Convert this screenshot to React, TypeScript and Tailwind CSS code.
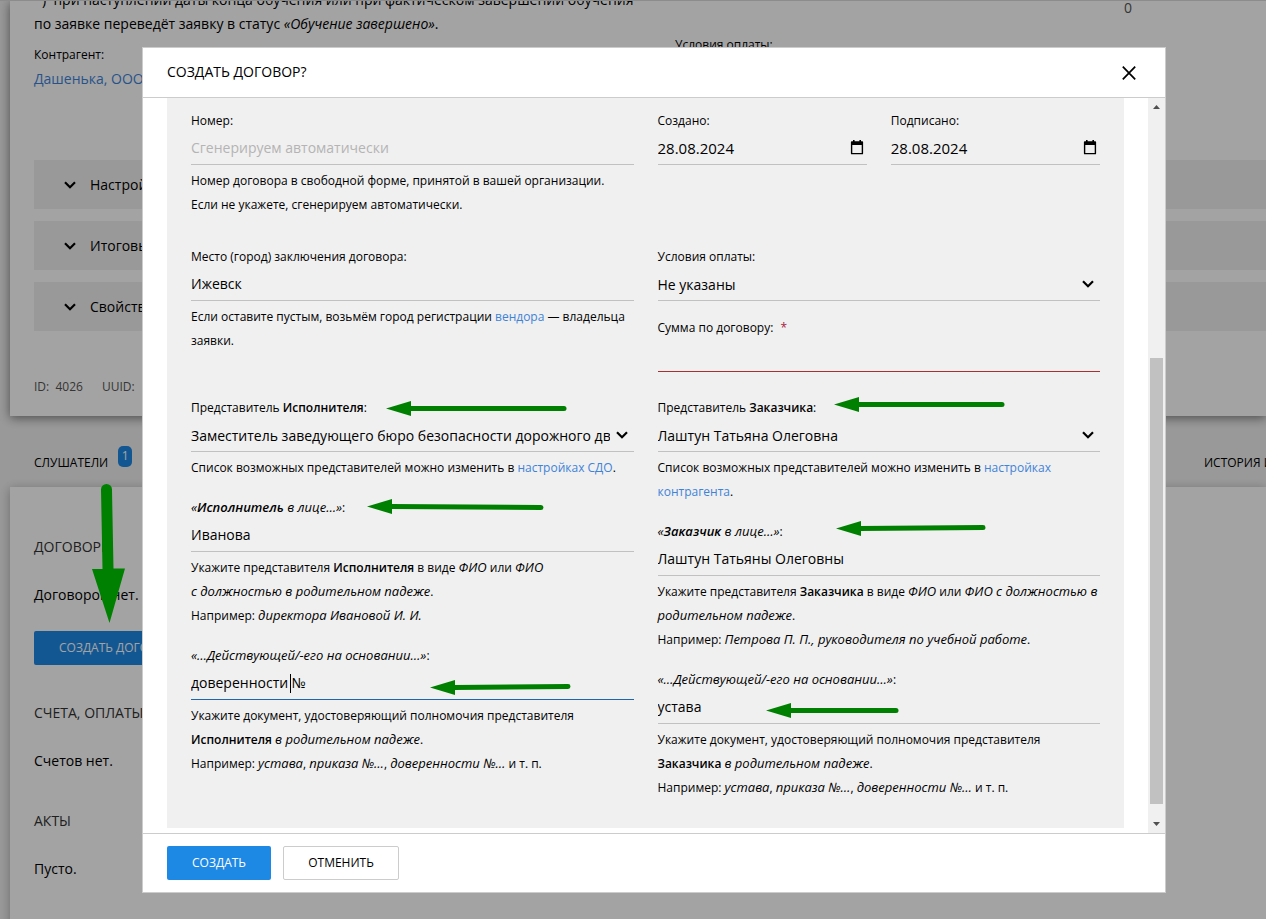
import { useId, type ReactNode } from "react";

function Chevron({ className }: { className: string }) {
  return (
    <svg viewBox="0 0 12 8" className={className} fill="none" stroke="#000" strokeWidth="2.2" aria-hidden="true">
      <path d="M1 1.2 6 6.2 11 1.2" />
    </svg>
  );
}

function CalendarIcon() {
  return (
    <svg viewBox="0 0 14 15" className="h-[15px] w-[14px]" aria-hidden="true">
      <path fillRule="evenodd" d="M3 0h1.6v1.2h4.8V0H11v1.2h1.2q.9 0 .9.9v11.3q0 .9-.9.9H1.8q-.9 0-.9-.9V2.1q0-.9.9-.9H3zM2.3 5v7.9h9.4V5z" />
    </svg>
  );
}

const control =
  "block h-8 w-full appearance-none rounded-none border-b bg-transparent leading-[24px] text-black outline-none placeholder:text-[#b4b4b4]";

const lineColors = {
  normal: "border-b-[#c1c1c1]",
  required: "border-b-[#a8302f]",
  focused: "border-b-[#1f65ad]",
};

type FieldProps = {
  label: ReactNode;
  value?: string;
  placeholder?: string;
  kind?: "text" | "date" | "select";
  state?: keyof typeof lineColors;
  children?: ReactNode;
};

function Field({ label, value = "", placeholder, kind = "text", state = "normal", children }: FieldProps) {
  const id = useId();
  const line = lineColors[state];
  return (
    <div>
      <label htmlFor={id} className="block">
        {label}
      </label>
      <div className="relative">
        {kind === "select" ? (
          <>
            <select id={id} defaultValue={value} className={`${control} ${line} pr-6 text-[14px]`}>
              <option>{value}</option>
            </select>
            <Chevron className="pointer-events-none absolute top-[11px] right-[6px] h-2 w-3" />
          </>
        ) : (
          <input
            id={id}
            type="text"
            defaultValue={value}
            placeholder={placeholder}
            className={`${control} ${line} pb-[2px] ${kind === "date" ? "text-[15px]" : "text-[14px]"}`}
          />
        )}
        {kind === "date" && (
          <button type="button" aria-label="Выбрать дату" className="absolute top-[7px] right-[3px]">
            <CalendarIcon />
          </button>
        )}
        {state === "focused" && <span className="absolute top-[6px] left-[99px] h-[19px] w-px bg-black" />}
      </div>
      {children && <p className="pt-1">{children}</p>}
    </div>
  );
}

function Link({ children }: { children: ReactNode }) {
  return (
    <a href="#" className="text-[#3e83d8]">
      {children}
    </a>
  );
}

function Page() {
  return (
    <div className="h-screen overflow-hidden border-t border-[#dcdcdc] bg-[#f0f0f0] text-[14px] leading-[24px]">
      <section className="relative ml-[10px] h-[415px] overflow-hidden bg-white pl-6 shadow-[0_2px_10px_rgba(0,0,0,0.5)]">
        <div className="-mt-[13px] grid grid-cols-[600px_41px_1fr]">
          <p className="whitespace-nowrap">
            <span className="pl-2">)</span>&nbsp; при наступлении даты конца обучения или при фактическом завершении обучения
            <br />
            по заявке переведёт заявку в статус <i>«Обучение завершено»</i>.
          </p>
          <span />
          <p className="pt-2 pl-[449px] text-[#555]">0</p>
        </div>
        <div className="grid grid-cols-[600px_41px_1fr] pt-[7px]">
          <div>
            <div className="text-[12px]">Контрагент:</div>
            <a href="#" className="text-[#3e83d8]">
              Дашенька, ООО
            </a>
          </div>
          <span />
          <div className="-mt-[10px] text-[12px]">Условия оплаты:</div>
        </div>
        <div className="flex flex-col gap-3 pt-[69px]">
          {["Настройки", "Итоговые документы", "Свойства"].map((name) => (
            <button key={name} type="button" className="flex h-[49px] items-center bg-[#f0f0f0] pl-[30px] text-left">
              <Chevron className="mr-[14px] h-2 w-3" />
              {name}
            </button>
          ))}
        </div>
        <p className="flex pt-11 text-[12px] text-[#555]">
          <span className="w-[68px]">ID:&nbsp; 4026</span>
          <span>UUID:</span>
        </p>
      </section>
      <nav className="flex h-[71px] items-center justify-between pt-[22px] pl-[34px] text-[12px]">
        <a href="#" className="flex">
          СЛУШАТЕЛИ
          <span className="-mt-[5px] ml-[10px] h-[21px] w-[14px] rounded-[5px] bg-[#1e88e5] text-center leading-[20px] text-white">1</span>
        </a>
        <a href="#" className="w-[62px] overflow-hidden whitespace-nowrap">
          ИСТОРИЯ ИЗМЕНЕНИЙ
        </a>
      </nav>
      <section className="ml-[10px] h-full bg-white pt-12 pl-6 shadow-[0_2px_10px_rgba(0,0,0,0.3)]">
        <h2 className="text-[#333]">ДОГОВОРЫ</h2>
        <p className="pt-6">Договоров нет.</p>
        <button type="button" className="mt-6 block h-[34px] rounded-[2px] bg-[#1e88e5] px-[25px] text-[12px] text-white">
          СОЗДАТЬ ДОГОВОР
        </button>
        <h2 className="pt-9 text-[#333]">СЧЕТА, ОПЛАТЫ</h2>
        <p className="pt-6">Счетов нет.</p>
        <h2 className="pt-9 text-[#333]">АКТЫ</h2>
        <p className="pt-6">Пусто.</p>
      </section>
    </div>
  );
}

function ScrollBar() {
  return (
    <div className="flex w-[17px] shrink-0 flex-col items-center bg-[#f0f0f0] py-[7px]" aria-hidden="true">
      <svg viewBox="0 0 7 4" className="h-1 w-[7px]" fill="#505050">
        <path d="M0 4 3.500 0 7 4z" />
      </svg>
      <span className="grow-[249]" />
      <span className="w-[13px] grow-[446] bg-[#c1c1c1]" />
      <span className="grow-[18]" />
      <svg viewBox="0 0 7 4" className="h-1 w-[7px]" fill="#505050">
        <path d="M0 0 3.500 4 7 0z" />
      </svg>
    </div>
  );
}

function Dialog() {
  return (
    <div className="fixed inset-0 flex items-start bg-black/36 pt-[47px] pr-[100px] pl-[142px]">
      <div role="dialog" aria-labelledby="dialog-title" className="flex-1 border border-[#ccc] bg-white">
        <header className="flex h-[50px] items-center justify-between border-b border-[#ccc] pr-[29px] pl-6">
          <h1 id="dialog-title" className="pb-[2px] text-[14px]">
            СОЗДАТЬ ДОГОВОР?
          </h1>
          <button type="button" aria-label="Закрыть">
            <svg viewBox="0 0 14 14" className="h-[14px] w-[14px]" fill="none" stroke="#000" strokeWidth="1.7" aria-hidden="true">
              <path d="M.8.6 13.200 13.400M13.200.6.8 13.400" />
            </svg>
          </button>
        </header>
        <div className="flex">
          <form className="mb-[5px] ml-6 mr-6 flex-1 bg-[#f0f0f0] px-6 pt-[11px] pb-7 text-[12px] leading-[24px] [&_b]:font-semibold [&_i]:text-[13px] [&_i]:leading-none">
            <div className="grid grid-cols-2 gap-x-6">
              <Field label="Номер:" placeholder="Сгенерируем автоматически">
                Номер договора в свободной форме, принятой в вашей организации. Если не укажете, сгенерируем автоматически.
              </Field>
              <div className="grid grid-cols-2 gap-x-6">
                <Field label="Создано:" value="28.08.2024" kind="date" />
                <Field label="Подписано:" value="28.08.2024" kind="date" />
              </div>
            </div>
            <div className="grid grid-cols-2 gap-x-6 pt-7">
              <Field label="Место (город) заключения договора:" value="Ижевск">
                Если оставите пустым, возьмём город регистрации <Link>вендора</Link> — владельца заявки.
              </Field>
              <div className="flex flex-col gap-[15px]">
                <Field label="Условия оплаты:" value="Не указаны" kind="select" />
                <Field
                  label={
                    <>
                      Сумма по договору: <span className="pl-1 text-[#a8203f]">*</span>
                    </>
                  }
                  state="required"
                />
              </div>
            </div>
            <div className="grid grid-cols-2 gap-x-6 pt-6">
              <div className="flex flex-col gap-4">
                <Field
                  label={<>Представитель <b>Исполнителя</b>:</>}
                  value="Заместитель заведующего бюро безопасности дорожного движения"
                  kind="select"
                >
                  Список возможных представителей можно изменить в <Link>настройках СДО</Link>.
                </Field>
                <Field label={<><i>«<b>Исполнитель</b> в лице…»</i>:</>} value="Иванова">
                  Укажите представителя <b>Исполнителя</b> в виде <i>ФИО</i> или <i>ФИО</i>
                  <br />
                  <i>с должностью в родительном падеже</i>.
                  <br />
                  Например: <i>директора Ивановой И. И.</i>
                </Field>
                <Field label={<><i>«…Действующей/-его на основании…»</i>:</>} value="доверенности №" state="focused">
                  Укажите документ, удостоверяющий полномочия представителя
                  <br />
                  <b>Исполнителя</b> <i>в родительном падеже</i>.
                  <br />
                  Например: <i>устава</i>, <i>приказа №…</i>, <i>доверенности №…</i> и т. п.
                </Field>
              </div>
              <div className="flex flex-col gap-4">
                <Field label={<>Представитель <b>Заказчика</b>:</>} value="Лаштун Татьяна Олеговна" kind="select">
                  Список возможных представителей можно изменить в <Link>настройках<br />контрагента</Link>.
                </Field>
                <Field label={<><i>«<b>Заказчик</b> в лице…»</i>:</>} value="Лаштун Татьяны Олеговны">
                  Укажите представителя <b>Заказчика</b> в виде <i>ФИО</i> или <i>ФИО с должностью в</i>
                  <br />
                  <i>родительном падеже</i>.
                  <br />
                  Например: <i>Петрова П. П., руководителя по учебной работе</i>.
                </Field>
                <Field label={<><i>«…Действующей/-его на основании…»</i>:</>} value="устава">
                  Укажите документ, удостоверяющий полномочия представителя
                  <br />
                  <b>Заказчика</b> <i>в родительном падеже</i>.
                  <br />
                  Например: <i>устава</i>, <i>приказа №…</i>, <i>доверенности №…</i> и т. п.
                </Field>
              </div>
            </div>
          </form>
          <ScrollBar />
        </div>
        <footer className="flex gap-3 border-t border-[#ccc] px-6 py-3 text-[12px]">
          <button type="button" className="h-[34px] w-[104px] rounded-[2px] bg-[#1e88e5] text-white">
            СОЗДАТЬ
          </button>
          <button type="button" className="h-[34px] w-[116px] rounded-[2px] border border-[#ccc] bg-white">
            ОТМЕНИТЬ
          </button>
        </footer>
      </div>
    </div>
  );
}

const arrows = [
  { x: 386, y: 408, endX: 564, endY: 408 },
  { x: 367, y: 506, endX: 541, endY: 507 },
  { x: 834, y: 404, endX: 1002, endY: 404 },
  { x: 836, y: 528, endX: 983, endY: 527 },
  { x: 430, y: 687, endX: 568, endY: 686 },
  { x: 766, y: 710, endX: 896, endY: 710 },
];

function Arrows() {
  return (
    <svg className="pointer-events-none fixed inset-0 h-full w-full" fill="#008000" stroke="#008000" aria-hidden="true">
      {arrows.map((a) => (
        <g key={`${a.x}-${a.y}`}>
          <path stroke="none" d={`M${a.x} ${a.y + 0.5}l25-7.500v15z`} />
          <path strokeWidth="5" strokeLinecap="round" d={`M${a.x + 24} ${a.y + 0.5}L${a.endX} ${a.endY + 0.5}`} />
        </g>
      ))}
      <path stroke="none" d="M101 489.500a5.500 5.500 0 0 1 11 0L113.500 568.500H125L109.500 623 92 569H102.500z" />
    </svg>
  );
}

export default function App() {
  return (
    <div className="font-['Open_Sans','Noto_Sans',sans-serif] text-black">
      <Page />
      <Dialog />
      <Arrows />
    </div>
  );
}
